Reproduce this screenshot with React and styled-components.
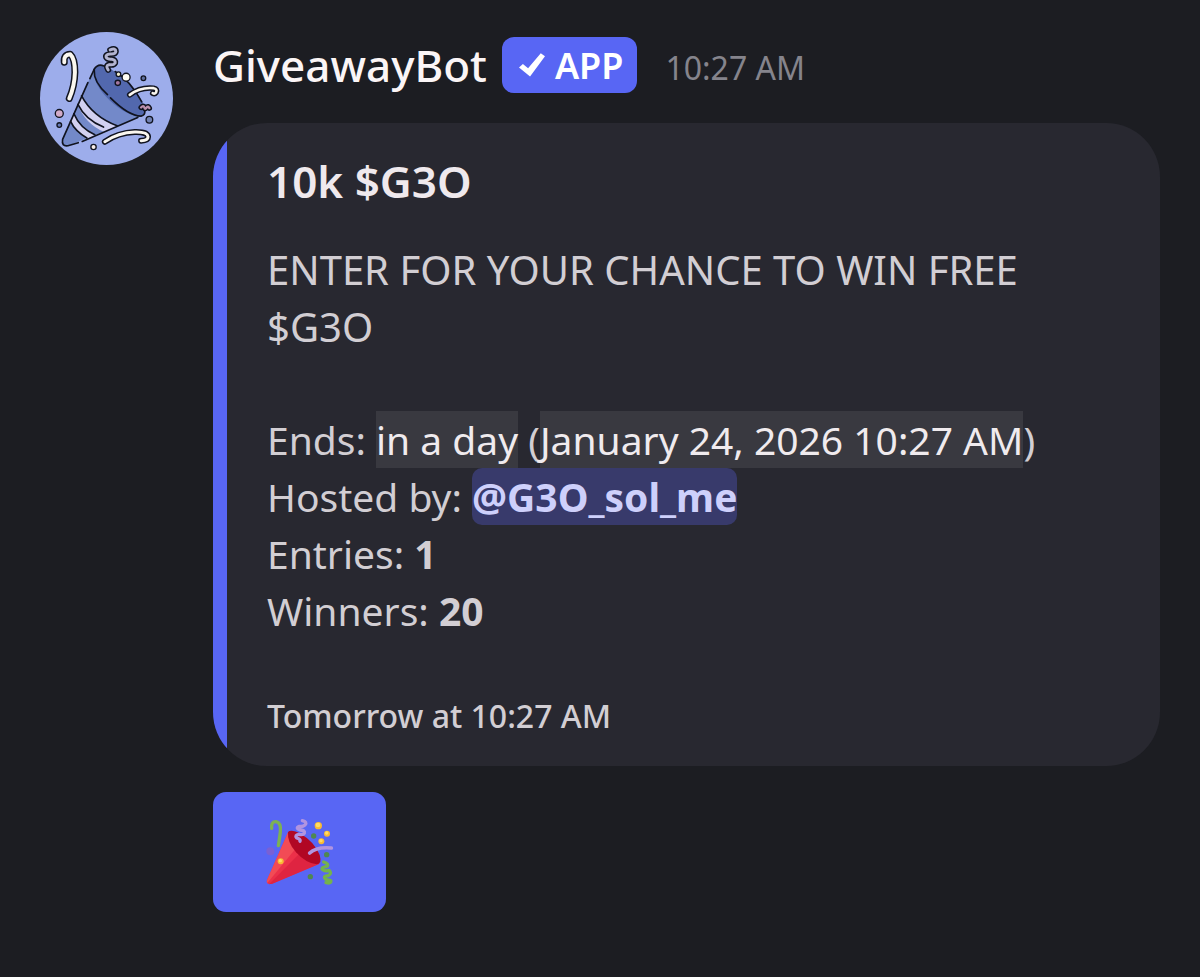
import React from "react";
import styled, { createGlobalStyle } from "styled-components";

const GlobalStyle = createGlobalStyle`
  * { box-sizing: border-box; }
  body {
    margin: 0;
    min-height: 100vh;
    background: #1c1d22;
    color: #d2ced3;
    font-family: "Noto Sans", "Open Sans", sans-serif;
  }
`;

const Message = styled.article`
  display: flex;
  align-items: flex-start;
  gap: 40px;
  padding: 32px 40px 64px;
`;

const AvatarArt = styled.svg`
  flex: none;
  width: 133px;
  height: 133px;
`;

const Content = styled.div`
  flex: 1;
  min-width: 0;
`;

const Header = styled.header`
  display: flex;
  align-items: center;
  padding-top: 5px;
  margin-bottom: 30px;
`;

const Author = styled.h1`
  margin: 0 15px 0 0;
  font-size: 44px;
  line-height: 56px;
  font-weight: 500;
  color: #fbf5f6;
`;

const AppTag = styled.span`
  display: flex;
  align-items: center;
  gap: 10px;
  height: 56px;
  padding: 0 14px 0 17px;
  border-radius: 12px;
  background: #5866f4;
  color: #ffffff;
  font-size: 36px;
  font-weight: 600;
`;

const Check = styled.svg`
  width: 26px;
  height: 24px;
`;

const Sent = styled.time`
  margin-left: 28px;
  padding-top: 5px;
  font-size: 32px;
  line-height: 44px;
  color: #85848c;
`;

const Embed = styled.section`
  display: flex;
  overflow: hidden;
  border-radius: 54px;
  background: #282830;
`;

const Accent = styled.div`
  flex: none;
  width: 14px;
  background: #5866f4;
`;

const EmbedBody = styled.div`
  flex: 1;
  padding: 30px 40px 28px;
`;

const Title = styled.h2`
  margin: 0 0 31px;
  font-size: 44px;
  line-height: 57px;
  font-weight: 600;
  color: #efe9ed;
`;

const Description = styled.p`
  margin: 0 0 56px;
  font-size: 40px;
  line-height: 57px;
`;

const Details = styled.p`
  margin: 0 0 55px;
  font-size: 39px;
  line-height: 57px;
`;

const Stamp = styled.time`
  display: inline-block;
  background: #393940;
  color: #f0ebee;
`;

const Mention = styled.a`
  display: inline-block;
  border-radius: 10px;
  background: #383a6b;
  color: #ced0fb;
  font-weight: 700;
  text-decoration: none;
`;

const Footer = styled.footer`
  font-size: 32px;
  line-height: 44px;
  font-weight: 500;
`;

const EnterButton = styled.button`
  display: block;
  margin-top: 26px;
  padding: 26px 52px;
  border: 0;
  border-radius: 13px;
  background: #5866f4;
  cursor: pointer;
`;

const PopperArt = styled.svg`
  display: block;
  width: 69px;
  height: 68px;
`;

function Streamer({ d, color, width }) {
  return (
    <>
      <path d={d} stroke="#10131f" strokeWidth={width} />
      <path d={d} stroke={color} strokeWidth={width - 9} />
    </>
  );
}

function Avatar() {
  return (
    <AvatarArt viewBox="30 37 400 400" role="img" aria-label="GiveawayBot avatar">
      <circle cx="230" cy="237" r="200" fill="#9dadeb" />
      <g fill="none" strokeLinecap="round" strokeLinejoin="round">
        <path
          d="M192 148 L98 362 Q94 380 112 380 L333 291 Q352 284 341 256 Q310 190 250 153 Q208 128 192 148Z"
          fill="#7389c9"
        />
        <path d="M155 228 Q188 294 263 320 L222 337 Q165 312 143 254Z" fill="#d2d1f1" />
        <path d="M131 283 Q150 327 196 347 L173 357 Q133 334 122 304Z" fill="#d2d1f1" />
        <path
          d="M192 146 Q210 130 243 149 Q300 184 329 231 Q359 280 333 290 Q292 291 239 242 Q186 191 192 146Z"
          fill="#5268ae"
        />
        <g stroke="#10131f" strokeWidth="5">
          <path d="M180 177 L193 149 Q204 131 222 139" />
          <path d="M174 189 L98 360 Q94 382 114 379 L145 370" />
          <path d="M157 366 L324 294" />
          <path d="M193 150 Q190 187 233 225" />
          <path d="M242 235 Q296 289 334 290 Q347 287 345 275" />
          <path d="M256 156 Q302 184 336 247" />
          <path d="M155 229 Q188 291 262 319" />
          <path d="M144 255 Q167 302 221 323" />
          <path d="M132 283 Q150 326 195 346" />
          <path d="M122 306 Q135 335 171 356" />
        </g>
        <Streamer
          d="M241 91 Q258 84 258 96 Q257 104 241 103 Q226 105 229 113 Q233 120 246 119 Q258 121 256 130 Q251 138 238 135 Q226 138 235 151"
          color="#b2b3cf"
          width={18}
        />
        <Streamer
          d="M103 128 Q100 105 121 104 Q135 117 135 158 Q134 200 118 237"
          color="#faf7ef"
          width={21}
        />
        <Streamer
          d="M300 226 Q331 202 372 206 Q384 208 379 219 Q375 224 369 221"
          color="#faf7ef"
          width={17}
        />
        <Streamer
          d="M225 367 Q265 340 315 338 Q354 337 355 352 Q355 363 334 364"
          color="#faf7ef"
          width={18}
        />
        <Streamer
          d="M334 264 Q341 256 344 264 Q345 272 351 264 Q355 258 359 266"
          color="#bd91ad"
          width={16}
        />
        <g stroke="#10131f" strokeWidth="4">
          <circle cx="88" cy="282" r="12" fill="#d2abc9" />
          <circle cx="88" cy="317" r="7" fill="#687bb7" />
          <circle cx="341" cy="176" r="7" fill="#60709f" />
          <circle cx="359" cy="301" r="10" fill="#7181b2" />
          <circle cx="191" cy="383" r="8" fill="#f8eee8" />
          <circle cx="264" cy="190" r="8" fill="#a477a0" />
          <circle cx="266" cy="164" r="7" fill="#ede9ca" />
          <circle cx="289" cy="173" r="12" fill="#fffdf4" />
        </g>
      </g>
    </AvatarArt>
  );
}

function Popper() {
  return (
    <PopperArt viewBox="30 27 207 204" role="img" aria-label="Enter giveaway">
      <path d="M100 68 L36 213 Q32 229 51 224 L193 164Z" fill="#ec3049" />
      <path d="M100 68 L36 213 Q34 219 37 222 L121 120Z" fill="#f24b55" />
      <path d="M42 226 L135 132 L194 164 L52 224Z" fill="#df2441" />
      <path
        d="M99 69 Q108 59 137 74 Q178 98 194 138 Q202 165 185 166 Q153 163 123 130 Q96 99 99 69Z"
        fill="#b10724"
      />
      <g fill="none" strokeLinecap="round" strokeLinejoin="round">
        <path d="M50 58 Q48 37 63 38 Q79 41 76 69 Q73 93 70 110" stroke="#7cb154" strokeWidth="10" />
        <path
          d="M142 35 Q158 39 150 48 Q143 54 133 52 Q120 57 135 63 Q151 63 148 73 Q145 79 132 76 Q118 79 125 87 Q138 91 135 97"
          stroke="#b194e0"
          strokeWidth="10"
        />
        <path d="M164 132 Q184 113 229 117" stroke="#b194e0" strokeWidth="11" />
        <path
          d="M206 159 Q223 164 216 172 Q198 175 202 181 Q209 188 222 184 Q232 193 220 200 Q206 201 209 207 Q213 214 226 214 Q231 218 222 222 L213 221"
          stroke="#74b34c"
          strokeWidth="10"
        />
      </g>
      <g fill="#4f8751">
        <circle cx="176" cy="81" r="8" />
        <circle cx="215" cy="137" r="8" />
        <circle cx="166" cy="203" r="8" />
      </g>
      <circle cx="46" cy="127" r="12" fill="#7960d4" />
      <g fill="#f9b934">
        <circle cx="190" cy="50" r="11" />
        <circle cx="216" cy="74" r="9" />
        <circle cx="199" cy="97" r="9" />
        <circle cx="77" cy="157" r="9" />
      </g>
      <g fill="#ffdc64">
        <circle cx="189" cy="48" r="7" />
        <circle cx="215" cy="72" r="5" />
        <circle cx="198" cy="95" r="5" />
        <circle cx="76" cy="155" r="5" />
      </g>
    </PopperArt>
  );
}

export default function App() {
  return (
    <>
      <GlobalStyle />
      <Message>
        <Avatar />
        <Content>
          <Header>
            <Author>GiveawayBot</Author>
            <AppTag>
              <Check viewBox="80 86 80 72" aria-hidden="true">
                <path d="M80 130 L92 119 L108 132 L147 86 L160 95 L114 157Z" fill="#ffffff" />
              </Check>
              APP
            </AppTag>
            <Sent>10:27 AM</Sent>
          </Header>
          <Embed>
            <Accent />
            <EmbedBody>
              <Title>10k $G3O</Title>
              <Description>ENTER FOR YOUR CHANCE TO WIN FREE $G3O</Description>
              <Details>
                Ends: <Stamp>in a day</Stamp> (<Stamp>January 24, 2026 10:27 AM</Stamp>)
                <br />
                Hosted by: <Mention href="#host">@G3O_sol_me</Mention>
                <br />
                Entries: <strong>1</strong>
                <br />
                Winners: <strong>20</strong>
              </Details>
              <Footer>Tomorrow at 10:27 AM</Footer>
            </EmbedBody>
          </Embed>
          <EnterButton type="button">
            <Popper />
          </EnterButton>
        </Content>
      </Message>
    </>
  );
}
